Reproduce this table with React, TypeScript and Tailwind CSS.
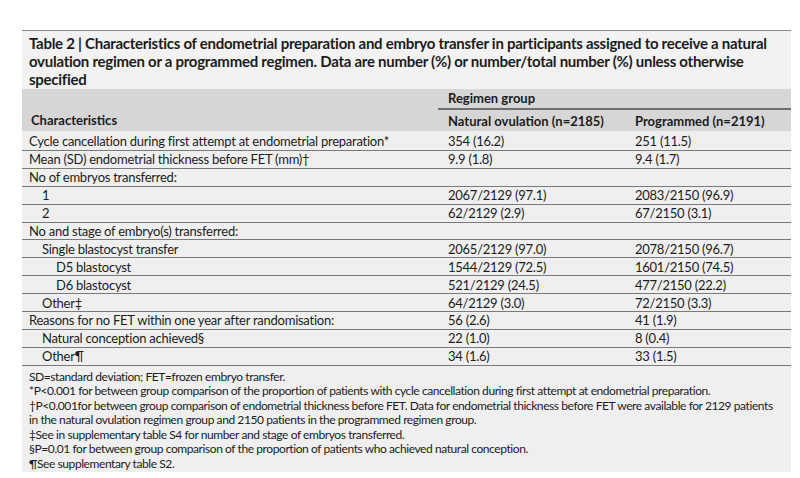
import React from "react";

const rows: { label: string; indent: number; a: string; b: string }[] = [
  { label: "Mean (SD) endometrial thickness before FET (mm)†", indent: 0, a: "9.9 (1.8)", b: "9.4 (1.7)" },
  { label: "No of embryos transferred:", indent: 0, a: "", b: "" },
  { label: "1", indent: 1, a: "2067/2129 (97.1)", b: "2083/2150 (96.9)" },
  { label: "2", indent: 1, a: "62/2129 (2.9)", b: "67/2150 (3.1)" },
  { label: "No and stage of embryo(s) transferred:", indent: 0, a: "", b: "" },
  { label: "Single blastocyst transfer", indent: 1, a: "2065/2129 (97.0)", b: "2078/2150 (96.7)" },
  { label: "D5 blastocyst", indent: 2, a: "1544/2129 (72.5)", b: "1601/2150 (74.5)" },
  { label: "D6 blastocyst", indent: 2, a: "521/2129 (24.5)", b: "477/2150 (22.2)" },
  { label: "Other‡", indent: 1, a: "64/2129 (3.0)", b: "72/2150 (3.3)" },
  { label: "Reasons for no FET within one year after randomisation:", indent: 0, a: "56 (2.6)", b: "41 (1.9)" },
  { label: "Natural conception achieved§", indent: 1, a: "22 (1.0)", b: "8 (0.4)" },
  { label: "Other¶", indent: 1, a: "34 (1.6)", b: "33 (1.5)" },
];

const indentCls = ["pl-[7px]", "pl-[20px]", "pl-[34px]"];

export default function App() {
  return (
    <div
      className="w-[800px] h-[478px] bg-white text-[#1c1c1c]"
      style={{ fontFamily: "Lato, 'Open Sans', sans-serif" }}
    >
      <div className="pt-[30px] pl-[22px]">
        <div className="w-[769px]">
          {/* Title */}
          <div className="border-t border-[#8a8a8a] bg-[#f2f2f2] px-[7px] pt-[3px] pb-[1px] text-[15px] leading-[18px] font-bold tracking-[-0.27px] whitespace-nowrap">
            <div>Table 2 | Characteristics of endometrial preparation and embryo transfer in participants assigned to receive a natural</div>
            <div>ovulation regimen or a programmed regimen. Data are number (%) or number/total number (%) unless otherwise</div>
            <div>specified</div>
          </div>
          {/* Header */}
          <div className="bg-[#d6d6d6] h-[42px] grid grid-cols-[416px_187px_166px] text-[13px] font-bold leading-[16px]">
            <div className="flex items-end pl-[9px] pb-[3px]">Characteristics</div>
            <div className="col-span-2 flex flex-col">
              <div className="h-[21px] flex items-end pl-[10px] pb-[2px] border-b-2 border-[#6e6e6e]">Regimen group</div>
              <div className="grid grid-cols-[187px_166px] flex-1">
                <div className="flex items-center pl-[10px]">Natural ovulation (n=2185)</div>
                <div className="flex items-center pl-[10px]">Programmed (n=2191)</div>
              </div>
            </div>
          </div>
          {/* Body */}
          <div className="bg-[#efefef] text-[13px] leading-[16px] tracking-[-0.25px]">
            <div className="grid grid-cols-[416px_187px_166px] h-[20px] items-center border-b-[1.5px] border-[#7a7a7a]">
              <div className="pl-[7px] whitespace-nowrap">Cycle cancellation during first attempt at endometrial preparation*</div>
              <div className="pl-[10px]">354 (16.2)</div>
              <div className="pl-[10px]">251 (11.5)</div>
            </div>
            {rows.map((r, i) => (
              <div
                key={i}
                className="grid grid-cols-[416px_187px_166px] h-[17.9px] items-center border-b-[1.5px] border-[#7a7a7a]"
              >
                <div className={`${indentCls[r.indent]} whitespace-nowrap`}>{r.label}</div>
                <div className="pl-[10px]">{r.a}</div>
                <div className="pl-[10px]">{r.b}</div>
              </div>
            ))}
          </div>
          {/* Footnotes */}
          <div className="bg-[#efefef] px-[7px] pt-[4px] pb-[1px] text-[12px] leading-[14.5px] tracking-[-0.42px] whitespace-nowrap">
            <div>SD=standard deviation; FET=frozen embryo transfer.</div>
            <div>*P&lt;0.001 for between group comparison of the proportion of patients with cycle cancellation during first attempt at endometrial preparation.</div>
            <div>†P&lt;0.001for between group comparison of endometrial thickness before FET. Data for endometrial thickness before FET were available for 2129 patients</div>
            <div>in the natural ovulation regimen group and 2150 patients in the programmed regimen group.</div>
            <div>‡See in supplementary table S4 for number and stage of embryos transferred.</div>
            <div>§P=0.01 for between group comparison of the proportion of patients who achieved natural conception.</div>
            <div>¶See supplementary table S2.</div>
          </div>
        </div>
      </div>
    </div>
  );
}
